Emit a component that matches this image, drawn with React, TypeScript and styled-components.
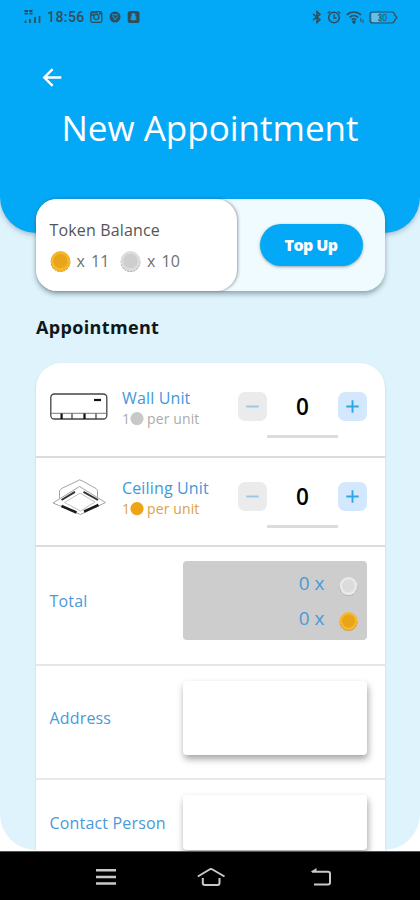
import React from "react";
import styled, { createGlobalStyle } from "styled-components";

const GlobalStyle = createGlobalStyle`
  *, *::before, *::after { box-sizing: border-box; }
  body { margin: 0; background: #fff; font-family: "Open Sans", "Noto Sans", sans-serif; }
  button { font: inherit; border: 0; padding: 0; }
  svg { display: block; flex: none; }
`;

const Phone = styled.div`
  width: 420px;
  height: 900px;
  display: flex;
  flex-direction: column;
  overflow: hidden;
  background: #fff;
`;

const Viewport = styled.main`
  height: 851px;
  flex: none;
  overflow: hidden;
  background: #fff;
`;

const Screen = styled.div`
  height: 850px;
  border-radius: 0 0 36px 36px;
  background: #def3fc;
`;

const Header = styled.header`
  height: 233px;
  border-radius: 0 0 36px 36px;
  background: #03a9f6;
  box-shadow: 0 2px 5px rgba(60, 90, 110, 0.35);
  color: #fff;
`;

const StatusBar = styled.div`
  height: 34px;
  padding: 0 22px 0 24px;
  display: flex;
  align-items: center;
  justify-content: space-between;
  color: #324d5a;
`;

const StatusGroup = styled.div<{ $gap: number }>`
  display: flex;
  align-items: center;
  gap: ${(p) => p.$gap}px;
`;

const Clock = styled.span`
  width: 38px;
  margin-right: -1px;
  font: 500 14px/16px Roboto, sans-serif;
  letter-spacing: 0.45px;
  white-space: nowrap;
`;

const BackButton = styled.button`
  display: block;
  margin: 33px 0 0 42px;
  background: none;
  color: #fff;
`;

const Title = styled.h1`
  margin: 17px 0 0;
  text-align: center;
  font-size: 35px;
  line-height: 48px;
  font-weight: 400;
`;

const Content = styled.div`
  margin: -34px 35px 0 36px;
  position: relative;
`;

const BalanceCard = styled.section`
  height: 92px;
  display: flex;
  border-radius: 21px;
  background: #effbfe;
  box-shadow: 0 3px 5px rgba(70, 90, 100, 0.5);
`;

const Balance = styled.div`
  width: 201px;
  padding: 20px 0 0 13.5px;
  border-radius: 21px;
  background: #fff;
  box-shadow: 1px 0 3px rgba(60, 70, 80, 0.5);
  color: #555;
`;

const BalanceLabel = styled.div`
  font-size: 16px;
  line-height: 22px;
  letter-spacing: 0.15px;
`;

const BalanceTokens = styled.div`
  margin-top: 9px;
  display: flex;
  align-items: center;
  color: #707070;
  font-size: 16px;
  line-height: 22px;
`;

const TokenCount = styled.span<{ $width: number }>`
  width: ${(p) => p.$width}px;
  margin-left: 6px;
  word-spacing: 2px;
  white-space: nowrap;
`;

const TopUpArea = styled.div`
  flex: 1;
  display: flex;
  align-items: center;
  justify-content: center;
`;

const TopUpButton = styled.button`
  width: 103px;
  height: 42px;
  border-radius: 21px;
  background: #03a9f6;
  box-shadow: 0 1px 3px rgba(60, 80, 90, 0.5);
  color: #fff;
  font-size: 16px;
  font-weight: 800;
  letter-spacing: -0.6px;
`;

const SectionTitle = styled.h2`
  margin: 24px 0 0;
  color: #101719;
  font-size: 18px;
  line-height: 25px;
  font-weight: 700;
  letter-spacing: 0.35px;
`;

const FormCard = styled.section`
  height: 540px;
  margin-top: 23px;
  border-radius: 25px 25px 0 0;
  background: #fff;
  box-shadow: 0 1px 2px rgba(60, 130, 140, 0.3);
`;

const FormRow = styled.div<{ $height: number; $line?: string }>`
  height: ${(p) => p.$height}px;
  padding-left: 13.5px;
  display: flex;
  border-bottom: 2px solid ${(p) => p.$line ?? "#dcdcdc"};
`;

const UnitPicture = styled.div<{ $top: number }>`
  width: 72.5px;
  padding-top: ${(p) => p.$top}px;
`;

const UnitText = styled.div<{ $top: number }>`
  width: 116px;
  padding-top: ${(p) => p.$top}px;
`;

const UnitName = styled.div`
  color: #3f98dc;
  font-size: 16px;
  line-height: 21px;
  letter-spacing: 0.15px;
  white-space: nowrap;
`;

const UnitPrice = styled.div<{ $color: string }>`
  display: flex;
  align-items: center;
  color: ${(p) => p.$color};
  font-size: 14px;
  line-height: 20px;
  letter-spacing: 0.1px;
  white-space: nowrap;
`;

const PriceUnit = styled.span`
  margin-left: 3px;
`;

const Stepper = styled.div<{ $top: number }>`
  display: flex;
  align-items: flex-start;
  padding-top: ${(p) => p.$top}px;
`;

const StepButton = styled.button<{ $active?: boolean }>`
  width: 29px;
  height: 29px;
  display: flex;
  align-items: center;
  justify-content: center;
  border-radius: 7px;
  background: ${(p) => (p.$active ? "#d3e8fc" : "#ebebeb")};
  color: ${(p) => (p.$active ? "#2fa6e8" : "#9cc6e6")};
`;

const Quantity = styled.output`
  width: 71px;
  height: 46px;
  border-bottom: 3px solid #dcdcdc;
  color: #000;
  text-align: center;
  font-size: 22.5px;
  line-height: 30px;
  font-weight: 600;
`;

const FieldLabel = styled.label<{ $top: number }>`
  width: 133px;
  padding-top: ${(p) => p.$top}px;
  color: #4a9ad8;
  font-size: 16px;
  line-height: 22px;
  letter-spacing: 0.17px;
  white-space: nowrap;
`;

const TotalBox = styled.div`
  width: 184px;
  height: 79px;
  margin-top: 14px;
  padding: 5px 9px 0 0;
  border-radius: 4px;
  background: #cdcdcd;
`;

const TotalLine = styled.div`
  height: 35px;
  display: flex;
  justify-content: flex-end;
  align-items: center;
  gap: 14px;
  color: #4a9ad8;
  font-size: 19px;
  line-height: 35px;
`;

const TotalCoin = styled.span`
  padding-top: 5px;
`;

const Field = styled.div<{ $height: number }>`
  width: 184px;
  height: ${(p) => p.$height}px;
  margin-top: 15px;
  border-radius: 4px;
  background: #fff;
  box-shadow: 1px 4px 7px rgba(0, 0, 0, 0.36);
`;

const NavBar = styled.nav`
  height: 49px;
  display: flex;
  align-items: center;
  padding: 2px 0 0 95px;
  background: #000;
  border-top: 1px solid #555;
  color: #c9c9c9;
`;

const NavItem = styled.span<{ $width: number }>`
  width: ${(p) => p.$width}px;
`;

type CoinKind = "gold" | "silver";
const coinTones = {
  gold: { edge: "#b98425", rim: "#f6b729", face: "#e9a51a" },
  silver: { edge: "#959595", rim: "#dcdcdc", face: "#cecece" },
};

function Coin({ kind, size, light }: { kind: CoinKind; size: number; light?: boolean }) {
  const c = coinTones[kind];
  const rim = light ? "#e9e9e9" : c.rim;
  const face = light ? "#dcdcdc" : c.face;
  return (
    <svg width={size} height={size} viewBox="0 0 20 20">
      <circle cx="10" cy="10.7" r="8.9" fill={rim} stroke={c.edge} strokeWidth="0.9" strokeDasharray="2 1" />
      <circle cx="10" cy="9.4" r="9.3" fill={rim} />
      <circle cx="10" cy="9.5" r="6.8" fill={face} />
    </svg>
  );
}

function FlatCoin({ color }: { color: string }) {
  return (
    <svg width="14" height="14" viewBox="0 0 14 14">
      <circle cx="7" cy="6.6" r="6.6" fill={color} />
    </svg>
  );
}

function WallUnitIcon() {
  return (
    <svg width="58" height="28" viewBox="0 0 58 28" fill="none" stroke="#444">
      <rect x="0.8" y="1" width="56" height="25" rx="3.5" strokeWidth="1.3" />
      <path d="M1 20.3H57" stroke="#777" strokeWidth="1" />
      <path d="M44 7H51" stroke="#111" strokeWidth="2.2" />
      <path d="M11.6 20.5V26M34.5 20.5V26" stroke="#111" strokeWidth="2.2" />
      <path d="M22 20.5V26M46 20.5V26" strokeWidth="1.3" />
    </svg>
  );
}

function CeilingUnitIcon() {
  return (
    <svg width="58" height="38" viewBox="0 0 58 38" fill="none" stroke="#999" strokeWidth="0.9">
      <path d="M9.5 20V12.5L12 10.3L27 3.2L29.5 1.8L33 3.3L46 10.5L47.5 12.5V20" />
      <path d="M3 25L29.5 8.5L55.5 24.5L30.5 36.5Z" fill="#fff" />
      <path d="M14.5 24.5L30 15L45 24L30.5 33Z" stroke="#bbb" />
      <path d="M11.5 22L25 13.8M33.5 13.8L48 22" stroke="#333" strokeWidth="2" />
      <path d="M11.5 28L26.5 34.5M34 33.5L48.5 27" stroke="#1c1c1c" strokeWidth="2.5" />
    </svg>
  );
}

function StepGlyph({ plus }: { plus?: boolean }) {
  return (
    <svg width="13" height="13" viewBox="0 0 13 13" fill="none" stroke="currentColor" strokeWidth="1.9">
      <path d={plus ? "M0.3 6.5H12.7M6.5 0.3V12.7" : "M0.3 6.5H12.7"} />
    </svg>
  );
}

function StatusIcons() {
  return (
    <StatusBar>
      <StatusGroup $gap={6}>
        <svg width="17" height="16" viewBox="0 0 17 16" stroke="currentColor" fill="none">
          <path d="M0.5 2H4M5 2H8.5M0.5 4.6H4M5 4.6H8.5" strokeWidth="1.8" />
          <path d="M1.5 14V11.5M6 14V10M11 14V8M15.5 14V7" strokeWidth="1.7" />
        </svg>
        <Clock>18:56</Clock>
        <svg width="13" height="12" viewBox="0 0 13 12" fill="none" stroke="currentColor" strokeWidth="1.3">
          <rect x="0.8" y="0.7" width="11" height="10.6" rx="1.5" />
          <path d="M1 1.8H8M1 4H4" />
          <circle cx="6.3" cy="6" r="2.6" />
          <path d="M9 2.5H11" strokeWidth="2" />
        </svg>
        <svg width="12" height="12" viewBox="0 0 12 12">
          <circle cx="6" cy="6" r="5.5" fill="currentColor" />
          <path d="M3 3.8H9M3.3 5L5 7L6 9L8.8 5.4" stroke="#15a0e0" strokeWidth="1" fill="none" />
        </svg>
        <svg width="13" height="12" viewBox="0 0 13 12">
          <rect x="0.7" width="11.8" height="12" rx="2.6" fill="currentColor" />
          <path d="M6.5 2C4.8 2 4.4 3.1 4.6 5.3L3.3 6L4.5 6.7L3 8.4L5.2 9L6.5 9.8L7.8 9L10 8.4L8.5 6.7L9.7 6L8.4 5.3C8.6 3.1 8.2 2 6.5 2Z" fill="#18a0df" />
        </svg>
      </StatusGroup>
      <StatusGroup $gap={5}>
        <svg width="10" height="14" viewBox="0 0 10 14" fill="none" stroke="currentColor" strokeWidth="1.5">
          <path d="M1 4L8 9.6L5 12.5V1.5L8 4.4L1 10" />
        </svg>
        <svg width="14" height="14" viewBox="0 0 14 14" fill="none" stroke="currentColor" strokeWidth="1.5">
          <circle cx="7" cy="7.5" r="5.3" />
          <path d="M7 4.5V8H9.5M0.7 3.3L3 1.2M13.3 3.3L11 1.2" />
        </svg>
        <svg width="18" height="14" viewBox="0 0 18 14" fill="none" stroke="currentColor" strokeWidth="1.6">
          <path d="M0.8 5C4.8 0.9 10.8 0.9 15 5M3.5 7.5C6.2 5 9.4 5 12.2 7.5M5.7 9.8C7.1 8.5 8.7 8.5 10.1 9.8" />
          <circle cx="8" cy="12" r="1" fill="currentColor" />
          <path d="M14.8 8V12M17 9.5V13" strokeWidth="0.9" />
        </svg>
        <svg width="29" height="13" viewBox="0 0 29 13" fill="none" stroke="currentColor">
          <rect x="2.5" y="2" width="7.5" height="9" fill="#69bde9" stroke="none" />
          <path d="M3.5 1H23Q25.5 1 25.7 4L28 6.5L25.7 9Q25.5 12 23 12H3.5Q1 12 1 9V4Q1 1 3.5 1Z" strokeWidth="1.2" />
          <text x="8.5" y="9.5" fontSize="8.5" fontFamily="Roboto, sans-serif" fill="currentColor" stroke="none">30</text>
        </svg>
      </StatusGroup>
    </StatusBar>
  );
}

interface UnitProps {
  name: string;
  kind: CoinKind;
  height: number;
  offset: number;
  iconTop: number;
  icon: React.ReactNode;
}

function UnitRow({ name, kind, height, offset, iconTop, icon }: UnitProps) {
  return (
    <FormRow $height={height}>
      <UnitPicture $top={iconTop}>{icon}</UnitPicture>
      <UnitText $top={offset - 4}>
        <UnitName>{name}</UnitName>
        <UnitPrice $color={kind === "gold" ? "#dda043" : "#ababab"}>
          1<FlatCoin color={kind === "gold" ? "#eda515" : "#c8c8c8"} />
          <PriceUnit>per unit</PriceUnit>
        </UnitPrice>
      </UnitText>
      <Stepper $top={offset}>
        <StepButton aria-label="Remove"><StepGlyph /></StepButton>
        <Quantity>0</Quantity>
        <StepButton $active aria-label="Add"><StepGlyph plus /></StepButton>
      </Stepper>
    </FormRow>
  );
}

export default function App() {
  return (
    <Phone>
      <GlobalStyle />
      <Viewport>
        <Screen>
          <Header>
            <StatusIcons />
            <BackButton aria-label="Back">
              <svg width="20" height="20" viewBox="0 0 20 20" fill="none" stroke="currentColor" strokeWidth="2.4">
                <path d="M19.3 10.5H2.5M10.6 2.2L2.3 10.5L10.6 18.8" />
              </svg>
            </BackButton>
            <Title>New Appointment</Title>
          </Header>
          <Content>
            <BalanceCard>
              <Balance>
                <BalanceLabel>Token Balance</BalanceLabel>
                <BalanceTokens>
                  <Coin kind="gold" size={21} />
                  <TokenCount $width={43.5}>x 11</TokenCount>
                  <Coin kind="silver" size={21} />
                  <TokenCount $width={40}>x 10</TokenCount>
                </BalanceTokens>
              </Balance>
              <TopUpArea>
                <TopUpButton>Top Up</TopUpButton>
              </TopUpArea>
            </BalanceCard>
            <SectionTitle>Appointment</SectionTitle>
            <FormCard>
              <UnitRow name="Wall Unit" kind="silver" height={95} offset={29} iconTop={30} icon={<WallUnitIcon />} />
              <UnitRow name="Ceiling Unit" kind="gold" height={89} offset={24} iconTop={20} icon={<CeilingUnitIcon />} />
              <FormRow $height={119} $line="#e6e6e6">
                <FieldLabel $top={43}>Total</FieldLabel>
                <TotalBox>
                  <TotalLine>0 x<TotalCoin><Coin kind="silver" size={19} light /></TotalCoin></TotalLine>
                  <TotalLine>0 x<TotalCoin><Coin kind="gold" size={19} /></TotalCoin></TotalLine>
                </TotalBox>
              </FormRow>
              <FormRow $height={114} $line="#e9e9e9">
                <FieldLabel $top={41}>Address</FieldLabel>
                <Field $height={74} />
              </FormRow>
              <FormRow $height={114}>
                <FieldLabel $top={32}>Contact Person</FieldLabel>
                <Field $height={55} />
              </FormRow>
            </FormCard>
          </Content>
        </Screen>
      </Viewport>
      <NavBar>
        <NavItem $width={102}>
          <svg width="22" height="18" viewBox="0 0 22 18" stroke="currentColor" strokeWidth="2.4">
            <path d="M1 2.2H21M1 9H21M1 15.5H21" />
          </svg>
        </NavItem>
        <NavItem $width={113}>
          <svg width="30" height="20" viewBox="0 0 30 20" fill="none" stroke="currentColor" strokeWidth="2">
            <path d="M0.8 9.5L12.5 2.5Q14 1.6 15.5 2.5L27.5 9.5M5.8 11V16Q5.8 18 7.8 18H20.5Q22.5 18 22.5 16V11" />
          </svg>
        </NavItem>
        <NavItem $width={24}>
          <svg width="22" height="20" viewBox="0 0 22 20" fill="none" stroke="currentColor" strokeWidth="2">
            <path d="M2 4.7H18Q20 4.7 20 6.7V15.5Q20 17.5 18 17.5H4" />
            <path d="M0.5 5L6.5 1V5Z" fill="currentColor" stroke="none" />
          </svg>
        </NavItem>
      </NavBar>
    </Phone>
  );
}
